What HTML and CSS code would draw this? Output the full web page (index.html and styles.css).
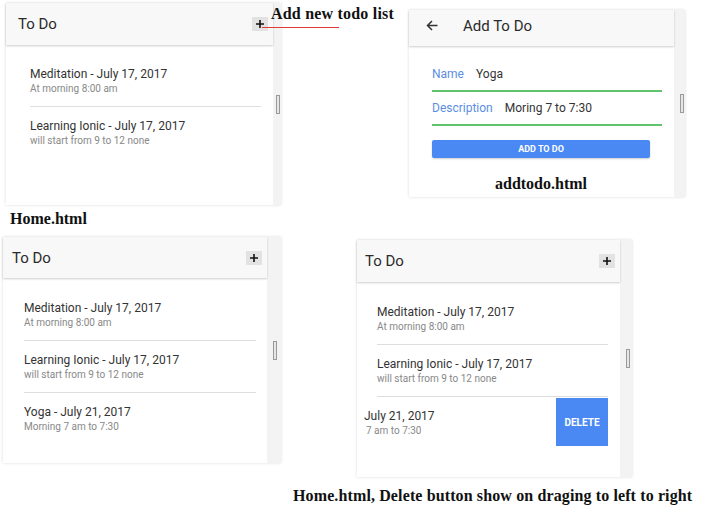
FILE: index.html
```html
<!DOCTYPE html>
<html lang="en">
<head>
  <meta charset="UTF-8">
  <title>To Do app screens</title>
  <link rel="stylesheet" href="styles.css">
</head>
<body>
  <div class="sheet">
    <div class="row row-top">
      <!-- Home page -->
      <figure class="shot shot-home">
        <div class="phone">
          <div class="app">
            <header class="bar">
              <span class="bar-title">To Do</span>
              <button class="add-btn">
                <svg width="8" height="8" viewBox="0 0 8 8"><path d="M4 0v8M0 4h8" stroke="#111" stroke-width="1.6"/></svg>
              </button>
            </header>
            <ul class="list">
              <li class="item">
                <h2>Meditation - July 17, 2017</h2>
                <p>At morning 8:00 am</p>
              </li>
              <li class="item">
                <h2>Learning Ionic - July 17, 2017</h2>
                <p>will start from 9 to 12 none</p>
              </li>
            </ul>
          </div>
          <div class="gutter"><span class="thumb"></span></div>
        </div>
        <figcaption class="note note-home">Home.html</figcaption>
        <span class="callout-line"></span>
        <span class="note callout">Add new todo list</span>
      </figure>

      <!-- Add page -->
      <figure class="shot shot-add">
        <div class="phone">
          <div class="app">
            <header class="bar bar-back">
              <svg class="back" width="12" height="11" viewBox="0 0 12 11"><path d="M11.5 5.5H1.5M6 1L1.5 5.5 6 10" fill="none" stroke="#333" stroke-width="1.5"/></svg>
              <span class="bar-title">Add To Do</span>
            </header>
            <div class="form">
              <div class="field"><label>Name</label><span>Yoga</span></div>
              <div class="field"><label>Description</label><span>Moring 7 to 7:30</span></div>
              <button class="submit">ADD TO DO</button>
              <figcaption class="note note-add">addtodo.html</figcaption>
            </div>
          </div>
          <div class="gutter"><span class="thumb"></span></div>
        </div>
      </figure>
    </div>

    <div class="row row-bottom">
      <!-- Home page with three items -->
      <figure class="shot shot-full">
        <div class="phone">
          <div class="app">
            <header class="bar">
              <span class="bar-title">To Do</span>
              <button class="add-btn">
                <svg width="8" height="8" viewBox="0 0 8 8"><path d="M4 0v8M0 4h8" stroke="#111" stroke-width="1.6"/></svg>
              </button>
            </header>
            <ul class="list">
              <li class="item">
                <h2>Meditation - July 17, 2017</h2>
                <p>At morning 8:00 am</p>
              </li>
              <li class="item">
                <h2>Learning Ionic - July 17, 2017</h2>
                <p>will start from 9 to 12 none</p>
              </li>
              <li class="item">
                <h2>Yoga - July 21, 2017</h2>
                <p>Morning 7 am to 7:30</p>
              </li>
            </ul>
          </div>
          <div class="gutter"><span class="thumb"></span></div>
        </div>
      </figure>

      <!-- Home page, item slid open -->
      <figure class="shot shot-swipe">
        <div class="phone">
          <div class="app">
            <header class="bar">
              <span class="bar-title">To Do</span>
              <button class="add-btn">
                <svg width="8" height="8" viewBox="0 0 8 8"><path d="M4 0v8M0 4h8" stroke="#111" stroke-width="1.6"/></svg>
              </button>
            </header>
            <ul class="list">
              <li class="item">
                <h2>Meditation - July 17, 2017</h2>
                <p>At morning 8:00 am</p>
              </li>
              <li class="item">
                <h2>Learning Ionic - July 17, 2017</h2>
                <p>will start from 9 to 12 none</p>
              </li>
              <li class="item item-swiped">
                <div class="slide">
                  <h2>July 21, 2017</h2>
                  <p>7 am to 7:30</p>
                </div>
                <button class="delete-btn">DELETE</button>
              </li>
            </ul>
          </div>
          <div class="gutter"><span class="thumb"></span></div>
        </div>
        <figcaption class="note note-swipe">Home.html, Delete button show on draging to left to right</figcaption>
      </figure>
    </div>
  </div>
</body>
</html>
```

FILE: styles.css
```css
body {
  margin: 0;
  background: #fff;
  font-family: Roboto, "Liberation Sans", sans-serif;
}
.sheet {
  width: 713px;
  height: 523px;
  overflow: hidden;
}
.row {
  display: flex;
  align-items: flex-start;
}
.row-top { height: 230px; }
figure { margin: 0; }
.shot { position: relative; }
.shot-home { margin: 3px 0 0 6px; }
.shot-add { margin: 10px 0 0 128px; }
.shot-full { margin: 7px 0 0 3px; }
.shot-swipe { margin: 10px 0 0 76px; }

/* phone frame */
.phone {
  display: flex;
  box-shadow: 0 0 3px rgba(0,0,0,0.14);
}
.shot-home .phone { width: 275px; height: 202px; }
.shot-add .phone { width: 276px; height: 187px; }
.shot-full .phone { width: 278px; height: 226px; }
.shot-swipe .phone { width: 275px; height: 237px; }
.app {
  flex: 1;
  display: flex;
  flex-direction: column;
  background: #fff;
}
.gutter {
  background: #f3f3f3;
  display: flex;
  align-items: center;
  justify-content: flex-end;
  padding-right: 1px;
}
.shot-home .gutter { width: 7px; }
.shot-add .gutter { width: 10px; }
.shot-full .gutter { width: 10px; padding-right: 4px; }
.shot-swipe .gutter { width: 10px; padding-right: 2px; }
.thumb {
  width: 2px;
  height: 17px;
  border: 1px solid #9a9a9a;
  background: #e6e6e6;
}

/* toolbar */
.bar {
  position: relative;
  z-index: 1;
  flex-shrink: 0;
  display: flex;
  align-items: center;
  justify-content: space-between;
  height: 42px;
  padding: 0 5px 0 12px;
  background: #f8f8f8;
  box-shadow: 0 1px 2px rgba(0,0,0,0.2);
}
.shot-full .bar { height: 41px; padding-left: 9px; }
.shot-swipe .bar { padding-left: 8px; }
.bar-title {
  font-size: 15px;
  color: #2b2b2b;
}
.add-btn {
  width: 16px;
  height: 14px;
  padding: 0;
  border: 0;
  background: #e2e2e2;
  display: flex;
  align-items: center;
  justify-content: center;
}
.bar-back {
  justify-content: flex-start;
  height: 36px;
  padding: 0 0 5px 17px;
  box-sizing: border-box;
}
.back { margin-right: 25px; }

/* list */
.list {
  list-style: none;
  margin: 0;
  padding: 10px 12px 0 24px;
}
.shot-full .list { padding: 11px 11px 0 21px; }
.shot-swipe .list { padding: 11px 12px 0 20px; }
.item {
  padding: 11px 0 10px;
  border-bottom: 1px solid #dedede;
}
.item:last-child { border-bottom: 0; }
.item h2 {
  margin: 0;
  font-size: 12px;
  line-height: 16px;
  font-weight: 400;
  color: #333;
}
.item p {
  margin: 0;
  font-size: 10px;
  line-height: 14px;
  color: #888;
}
.item-swiped {
  display: flex;
  padding: 0;
}
.slide {
  padding: 11px 0 10px;
  margin-left: -13px;
}
.slide p { padding-left: 2px; }
.delete-btn {
  margin: 1px 0 2px auto;
  width: 52px;
  border: 0;
  background: #4a89f3;
  color: #fff;
  font: bold 10px Roboto, sans-serif;
}

/* add form */
.form { padding: 12px 12px 0 23px; }
.field {
  display: flex;
  gap: 12px;
  padding: 8px 0;
  border-bottom: 2px solid #5fc46c;
  font-size: 12px;
  line-height: 16px;
}
.field label { color: #5b8ee3; }
.field span { color: #333; }
.submit {
  display: block;
  margin-top: 14px;
  width: 218px;
  height: 18px;
  padding: 0;
  border: 0;
  border-radius: 2px;
  background: #4a89f3;
  color: #fff;
  font: bold 9px Roboto, sans-serif;
  box-shadow: 0 1px 2px rgba(0,0,0,0.2);
}

/* annotations */
.note {
  font-family: "Liberation Serif", serif;
  font-weight: bold;
  font-size: 16px;
  line-height: 18px;
  color: #111;
  white-space: nowrap;
}
.note-home { margin: 5px 0 0 4px; }
.note-add {
  margin: 17px 12px 0 0;
  text-align: center;
}
.note-swipe {
  letter-spacing: 0.12px;
  margin: 10px 0 0 -64px;
}
.callout {
  position: absolute;
  z-index: 2;
  left: 265px;
  top: 2px;
  letter-spacing: 0.2px;
}
.callout-line {
  position: absolute;
  z-index: 2;
  left: 256px;
  top: 24px;
  width: 77px;
  height: 1px;
  background: #e53935;
}
```
